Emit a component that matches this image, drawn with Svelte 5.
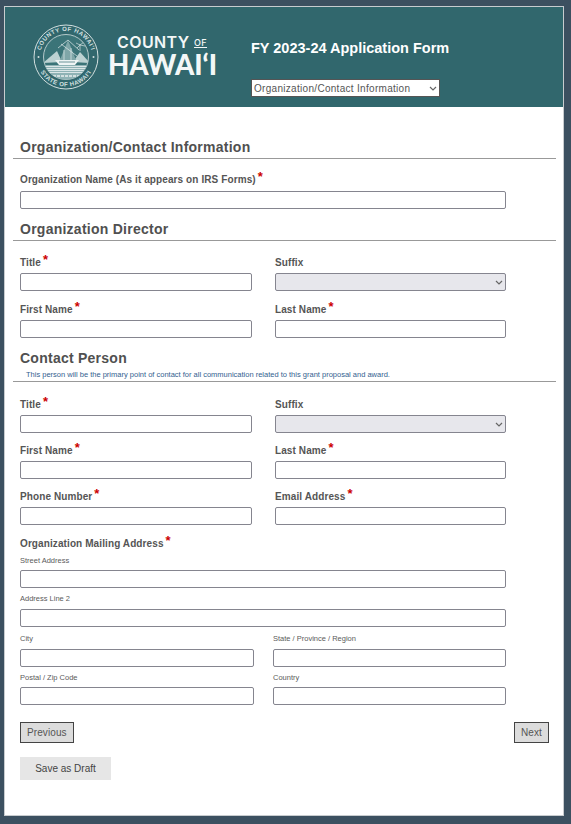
<script>
	const nameFields = [
		{ label: 'Title', required: true },
		{ label: 'Suffix', select: true },
		{ label: 'First Name', required: true },
		{ label: 'Last Name', required: true }
	];
</script>

{#snippet chevron()}
	<svg class="chevron" viewBox="0 0 8 5" width="8" height="5"><path d="M1 1 L4 4 L7 1" fill="none" stroke="#666" stroke-width="1.2" /></svg>
{/snippet}

{#snippet field(f)}
	<div class="field">
		<div class="label">{f.label}{#if f.required}<span class="req">*</span>{/if}</div>
		{#if f.select}
			<div class="select-wrap">
				<select class="input suffix"><option></option></select>
				{@render chevron()}
			</div>
		{:else}
			<input class="input" type="text" />
		{/if}
	</div>
{/snippet}

{#snippet sub(label, tall = false)}
	<div class="sub-field" class:tall>
		<div class="sub-label">{label}</div>
		<input class="input" type="text" />
	</div>
{/snippet}

<div class="page">
	<header class="banner">
		<div class="logo">
			<svg class="seal" viewBox="0 0 66 66" width="66" height="66">
				<defs>
					<path id="arcTop" d="M 7 33 A 26 26 0 0 1 59 33" />
					<path id="arcBottom" d="M 3.5 33 A 29.5 29.5 0 0 0 62.5 33" />
					<clipPath id="inner"><circle cx="33" cy="33" r="22.5" /></clipPath>
				</defs>
				<circle cx="33" cy="33" r="32" fill="none" stroke="#d3e0e0" stroke-width="1" />
				<circle cx="33" cy="33" r="22.5" fill="#3b7478" stroke="#d3e0e0" stroke-width="0.8" />
				<text class="seal-text"><textPath href="#arcTop" startOffset="50%" text-anchor="middle">COUNTY OF HAWAI'I</textPath></text>
				<text class="seal-text"><textPath href="#arcBottom" startOffset="50%" text-anchor="middle">STATE OF HAWAI'I</textPath></text>
				<circle cx="5.5" cy="33" r="1" fill="#d3e0e0" />
				<circle cx="60.5" cy="33" r="1" fill="#d3e0e0" />
				<g clip-path="url(#inner)">
					<path d="M10 39 L24 27 L29 38 Z" fill="#bcd2d2" />
					<path d="M40 38 L47 28 L57 39 Z" fill="#bcd2d2" />
					<path d="M27 36 L35 16 L43 36 Z" fill="#7fa6a8" />
					<path d="M35 16 L25 24 M35 16 L46 26 M31 26 V36 M38 24 V36 M28 20 L44 32" stroke="#e2ecec" stroke-width="0.7" fill="none" />
					<path d="M47 27 V20 M47 21 L43 19 M47 21 L51 18 M47 21 L52 22 M47 21 L44 24" stroke="#d3e0e0" stroke-width="0.7" fill="none" />
					<path d="M22 36 H46 L42 41 H26 Z" fill="#eef4f4" />
					<path d="M26 38 H42" stroke="#4b7f83" stroke-width="0.8" />
					<rect x="9" y="41" width="48" height="17" fill="#8fb3b5" />
					<path d="M9 42.5 H57 M9 44.5 H57 M9 46.5 H57 M9 48.5 H57" stroke="#e2ecec" stroke-width="0.9" />
					<path d="M16 52 H50" stroke="#d3e0e0" stroke-width="2" stroke-dasharray="3 1" />
				</g>
			</svg>
			<div class="wordmark">
				<div class="county">COUNTY <span class="of">OF</span></div>
				<div class="hawaii">HAWAI‘I</div>
			</div>
		</div>
		<div class="banner-right">
			<div class="form-title">FY 2023-24 Application Form</div>
			<div class="select-wrap page-wrap">
				<select class="page-select"><option>Organization/Contact Information</option></select>
				{@render chevron()}
			</div>
		</div>
	</header>

	<main class="content">
		<h2 class="section first">Organization/Contact Information</h2>
		<div class="row-full">
			{@render field({ label: 'Organization Name (As it appears on IRS Forms)', required: true })}
		</div>

		<h2 class="section">Organization Director</h2>
		<div class="grid director">
			{#each nameFields as f}
				{@render field(f)}
			{/each}
		</div>

		<div class="contact-head">
			<h2>Contact Person</h2>
			<p>This person will be the primary point of contact for all communication related to this grant proposal and award.</p>
		</div>
		<div class="grid contact">
			{#each nameFields as f}
				{@render field(f)}
			{/each}
			{@render field({ label: 'Phone Number', required: true })}
			{@render field({ label: 'Email Address', required: true })}
		</div>

		<div class="address">
			<div class="label">Organization Mailing Address<span class="req">*</span></div>
			{@render sub('Street Address')}
			{@render sub('Address Line 2', true)}
			<div class="grid-tight">
				{@render sub('City', true)}
				{@render sub('State / Province / Region', true)}
				{@render sub('Postal / Zip Code')}
				{@render sub('Country')}
			</div>
		</div>

		<div class="nav">
			<button class="nav-btn">Previous</button>
			<button class="nav-btn">Next</button>
		</div>
		<button class="draft">Save as Draft</button>
	</main>
</div>

<style>
	:global(body) {
		margin: 0;
		background: #3c5060;
		font-family: Arial, "Liberation Sans", sans-serif;
	}

	.page {
		box-sizing: border-box;
		width: 560px;
		height: 810px;
		margin: 6px 0 0 4px;
		background: #fff;
		border: 1px solid #c8cccf;
	}

	.banner {
		height: 100px;
		background: #31676d;
		display: flex;
	}

	.logo {
		display: flex;
		align-items: center;
		width: 246px;
		padding: 0 0 0 28px;
		box-sizing: border-box;
		gap: 9px;
	}

	.seal {
		flex: none;
		margin-top: -1px;
	}

	.seal-text {
		font-size: 6px;
		font-weight: 700;
		fill: #d3e0e0;
		letter-spacing: 0.5px;
	}

	.wordmark {
		color: #f3f7f7;
		margin-top: -3px;
	}

	.county {
		font: 600 16px/19px Inter, "Liberation Sans", sans-serif;
		letter-spacing: 0.4px;
		padding-left: 9px;
		white-space: nowrap;
	}

	.of {
		font-size: 9px;
		font-weight: 500;
		text-decoration: underline;
		vertical-align: 2px;
	}

	.hawaii {
		font: 900 27.5px/26px Lato, "Liberation Sans", sans-serif;
		white-space: nowrap;
	}

	.banner-right {
		padding-top: 33px;
	}

	.form-title {
		font-size: 14.5px;
		font-weight: 700;
		line-height: 16px;
		color: #fff;
		margin-bottom: 23px;
	}

	.select-wrap {
		position: relative;
	}

	.chevron {
		position: absolute;
		top: 7px;
		right: 3px;
		pointer-events: none;
	}

	.page-wrap {
		width: 189px;
	}

	.page-select {
		display: block;
		box-sizing: border-box;
		width: 100%;
		height: 18px;
		padding: 0 0 0 2px;
		appearance: none;
		font: 10px Arial, "Liberation Sans", sans-serif;
		letter-spacing: 0.3px;
		color: #555;
		background: #fff;
		border: 1px solid #555;
		border-radius: 0;
	}

	.content {
		padding: 0 7px 0 8px;
	}

	h2 {
		margin: 0;
		font-size: 14px;
		font-weight: 700;
		line-height: 17px;
		letter-spacing: 0.25px;
		color: #505050;
	}

	.section {
		margin-top: 12px;
		padding: 0 0 2px 7px;
		border-bottom: 1px solid #999;
	}

	.section.first {
		margin-top: 32px;
	}

	.label {
		font-size: 10px;
		font-weight: 700;
		line-height: 12px;
		letter-spacing: 0.1px;
		color: #555;
		white-space: nowrap;
	}

	.req {
		color: #c00;
		font-size: 13px;
		line-height: 0;
		margin-left: 2px;
		position: relative;
		top: -2px;
	}

	.input {
		display: block;
		box-sizing: border-box;
		width: 100%;
		height: 18px;
		margin: 0;
		padding: 0 2px;
		background: #fff;
		border: 1px solid #85858f;
		border-radius: 2px;
	}

	.suffix {
		appearance: none;
		background: #e7e7ec;
		color: #555;
	}

	.row-full {
		width: 486px;
		margin: 15px 0 0 7px;
	}

	.field .label {
		margin-bottom: 4px;
	}

	.row-full .field .label {
		margin-bottom: 5px;
	}

	.grid {
		display: grid;
		grid-template-columns: 232px 231px;
		column-gap: 23px;
		margin-left: 7px;
	}

	.grid.director {
		row-gap: 13px;
		margin-top: 16px;
	}

	.grid.contact {
		row-gap: 12px;
		margin-top: 17px;
	}

	.contact-head {
		margin-top: 12px;
		border-bottom: 1px solid #999;
		padding: 0 0 1px 7px;
	}

	.contact-head p {
		margin: 3px 0 0 6px;
		font-size: 7.5px;
		line-height: 10px;
		color: #33618f;
		white-space: nowrap;
	}

	.address {
		width: 486px;
		margin: 13px 0 0 7px;
	}

	.sub-field {
		margin-top: 6px;
	}

	.sub-label {
		font-size: 7.5px;
		line-height: 10px;
		color: #5b5b5b;
		margin-bottom: 4px;
	}

	.sub-field.tall .sub-label {
		margin-bottom: 5px;
	}

	.grid-tight {
		display: grid;
		grid-template-columns: 234px 233px;
		column-gap: 19px;
		margin-top: 1px;
	}

	.nav {
		display: flex;
		justify-content: space-between;
		margin: 17px 7px 0;
	}

	.nav-btn {
		height: 21px;
		padding: 0 6px;
		background: #dcdcdc;
		border: 1px solid #444;
		border-radius: 0;
		font: 10px Arial, "Liberation Sans", sans-serif;
		letter-spacing: 0.1px;
		color: #555;
	}

	.draft {
		display: block;
		width: 91px;
		height: 23px;
		margin: 14px 0 0 7px;
		background: #e6e6e6;
		border: none;
		font: 10px Arial, "Liberation Sans", sans-serif;
		color: #444;
	}
</style>
